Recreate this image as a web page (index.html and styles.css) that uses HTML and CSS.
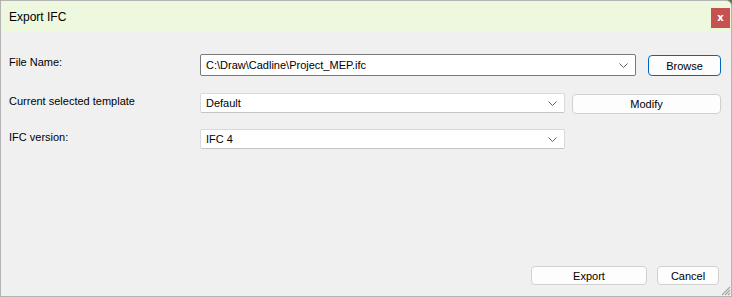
FILE: index.html
```html
<!DOCTYPE html>
<html lang="en">
<head>
<meta charset="UTF-8">
<title>Export IFC</title>
<link rel="stylesheet" href="styles.css">
</head>
<body>
<div class="dialog">
  <div class="titlebar">
    <span class="title">Export IFC</span>
    <button class="close">x</button>
  </div>

  <div class="content">
    <div class="row">
      <label class="label">File Name:</label>
      <div class="combo combo-wide focused">
        <span>C:\Draw\Cadline\Project_MEP.ifc</span>
        <svg class="chevron" width="9" height="5" viewBox="0 0 9 5"><path d="M0.5 0.5 L4.5 4.5 L8.5 0.5" fill="none" stroke="#606060" stroke-width="1"/></svg>
      </div>
      <button class="btn btn-browse">Browse</button>
    </div>
    <div class="row row-2">
      <label class="label">Current selected template</label>
      <div class="combo">
        <span>Default</span>
        <svg class="chevron" width="9" height="5" viewBox="0 0 9 5"><path d="M0.5 0.5 L4.5 4.5 L8.5 0.5" fill="none" stroke="#606060" stroke-width="1"/></svg>
      </div>
      <button class="btn btn-modify">Modify</button>
    </div>
    <div class="row row-3">
      <label class="label">IFC version:</label>
      <div class="combo">
        <span>IFC 4</span>
        <svg class="chevron" width="9" height="5" viewBox="0 0 9 5"><path d="M0.5 0.5 L4.5 4.5 L8.5 0.5" fill="none" stroke="#606060" stroke-width="1"/></svg>
      </div>
    </div>
  </div>

  <div class="footer">
    <button class="btn btn-export">Export</button>
    <button class="btn btn-cancel">Cancel</button>
  </div>

  <svg class="grip" width="12" height="12" viewBox="0 0 12 12">
    <path d="M11 3 L3 11 M11 6 L6 11 M11 9 L9 11" stroke="#a8a8a8" stroke-width="1.2"/>
  </svg>
</div>
</body>
</html>
```

FILE: styles.css
```css
* { box-sizing: border-box; }
body {
  margin: 0;
  background: #6b7448;
  font-family: "Liberation Sans", Arial, sans-serif;
  font-size: 11px;
  color: #000;
}
.dialog {
  position: relative;
  width: 732px;
  height: 297px;
  background: #f0f0f0;
  border: 1px solid #b4b4b4;
  border-top-right-radius: 6px;
  display: flex;
  flex-direction: column;
  overflow: hidden;
}
.titlebar {
  height: 30px;
  background: #eef8de;
  display: flex;
  align-items: flex-start;
  justify-content: space-between;
  padding-left: 8px;
}
.title {
  font-size: 12px;
  margin-top: 9px;
}
.close {
  width: 19px;
  height: 20px;
  margin: 7px 1px 0 0;
  border: none;
  padding: 0;
  background: #c75050;
  color: #fff;
  font-family: "DejaVu Sans", sans-serif;
  font-weight: bold;
  font-size: 10px;
  line-height: 18px;
}
.content {
  flex: 1;
  padding-top: 23px;
}
.row {
  display: flex;
  align-items: flex-start;
  height: 22px;
}
.row-2 { margin-top: 17px; }
.row-3 { margin-top: 14px; }
.label {
  width: 199px;
  padding-left: 8px;
  padding-top: 2px;
}
.combo {
  width: 365px;
  height: 20px;
  background: #fff;
  border: 1px solid #d9d9d9;
  border-bottom-color: #c4c4c4;
  border-radius: 2px;
  display: flex;
  align-items: center;
  justify-content: space-between;
  padding: 0 7px 0 5px;
}
.combo-wide {
  width: 436px;
  height: 22px;
}
.focused {
  border-color: #7a7a7a;
}
.chevron { margin-top: 1px; }
.btn {
  font-family: "Liberation Sans", Arial, sans-serif;
  font-size: 11px;
  color: #000;
  background: #fdfdfd;
  border: 1px solid #d0d0d0;
  border-radius: 4px;
  padding: 0;
  height: 20px;
}
.btn-browse {
  width: 73px;
  height: 21px;
  margin-left: 12px;
  margin-top: 1px;
  border-color: #0067c0;
}
.btn-modify {
  width: 149px;
  margin-left: 7px;
  margin-top: 1px;
}
.footer {
  display: flex;
  justify-content: flex-end;
  gap: 10px;
  padding: 0 12px 11px 0;
}
.btn-export { width: 116px; height: 19px; }
.btn-cancel { width: 62px; height: 19px; }
.grip {
  position: absolute;
  right: 0;
  bottom: 0;
}
```
